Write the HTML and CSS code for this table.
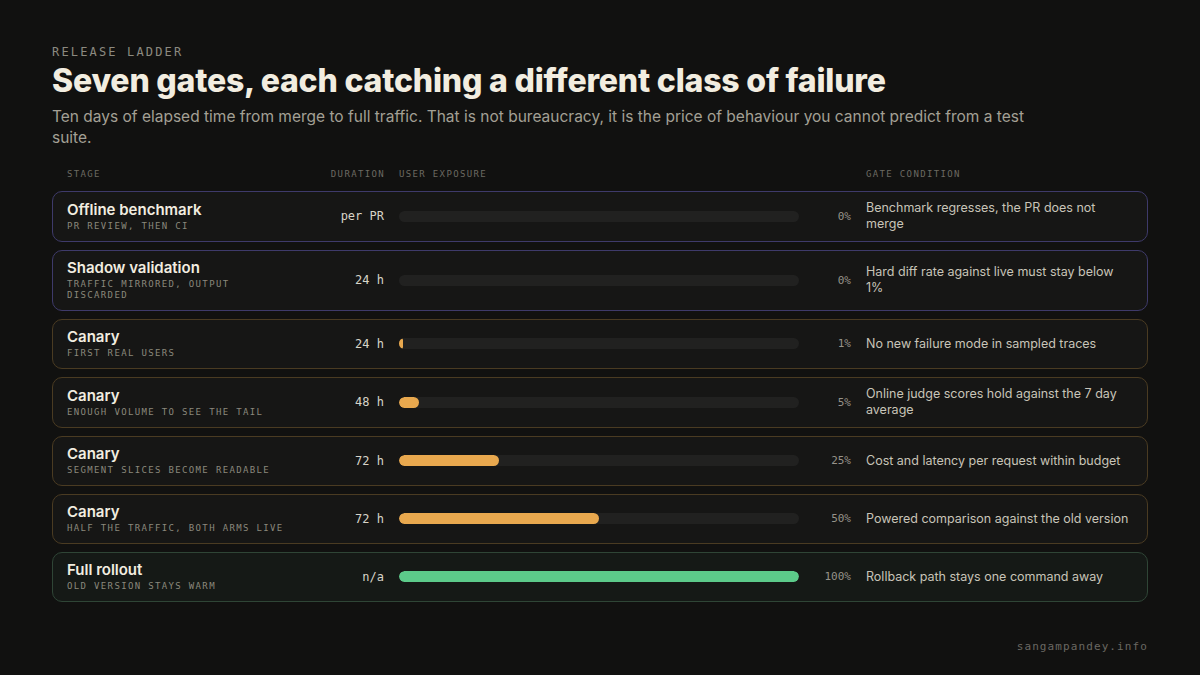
FILE: index.html
```html
<!DOCTYPE html>
<html lang="en">
<head>
<meta charset="utf-8">
<title>Release ladder</title>
<link rel="stylesheet" href="styles.css">
</head>
<body>
<main class="page">
  <header class="intro">
    <div class="eyebrow">RELEASE LADDER</div>
    <h1 class="title">Seven gates, each catching a different class of failure</h1>
    <p class="lede">Ten days of elapsed time from merge to full traffic. That is not bureaucracy, it is the price of behaviour you cannot predict from a test suite.</p>
  </header>

  <section class="ladder">
    <div class="grid head">
      <div>STAGE</div>
      <div class="dur">DURATION</div>
      <div>USER EXPOSURE</div>
      <div></div>
      <div>GATE CONDITION</div>
    </div>

    <div class="grid row pre">
      <div class="stage"><div class="name">Offline benchmark</div><div class="sub">PR REVIEW, THEN CI</div></div>
      <div class="dur">per PR</div>
      <div class="track"><div class="fill" style="width:0%"></div></div>
      <div class="pct">0%</div>
      <div class="gate">Benchmark regresses, the PR does not merge</div>
    </div>

    <div class="grid row pre">
      <div class="stage"><div class="name">Shadow validation</div><div class="sub">TRAFFIC MIRRORED, OUTPUT DISCARDED</div></div>
      <div class="dur">24 h</div>
      <div class="track"><div class="fill" style="width:0%"></div></div>
      <div class="pct">0%</div>
      <div class="gate">Hard diff rate against live must stay below 1%</div>
    </div>

    <div class="grid row canary">
      <div class="stage"><div class="name">Canary</div><div class="sub">FIRST REAL USERS</div></div>
      <div class="dur">24 h</div>
      <div class="track"><div class="fill" style="width:1%"></div></div>
      <div class="pct">1%</div>
      <div class="gate">No new failure mode in sampled traces</div>
    </div>

    <div class="grid row canary">
      <div class="stage"><div class="name">Canary</div><div class="sub">ENOUGH VOLUME TO SEE THE TAIL</div></div>
      <div class="dur">48 h</div>
      <div class="track"><div class="fill" style="width:5%"></div></div>
      <div class="pct">5%</div>
      <div class="gate">Online judge scores hold against the 7 day average</div>
    </div>

    <div class="grid row canary">
      <div class="stage"><div class="name">Canary</div><div class="sub">SEGMENT SLICES BECOME READABLE</div></div>
      <div class="dur">72 h</div>
      <div class="track"><div class="fill" style="width:25%"></div></div>
      <div class="pct">25%</div>
      <div class="gate">Cost and latency per request within budget</div>
    </div>

    <div class="grid row canary">
      <div class="stage"><div class="name">Canary</div><div class="sub">HALF THE TRAFFIC, BOTH ARMS LIVE</div></div>
      <div class="dur">72 h</div>
      <div class="track"><div class="fill" style="width:50%"></div></div>
      <div class="pct">50%</div>
      <div class="gate">Powered comparison against the old version</div>
    </div>

    <div class="grid row full">
      <div class="stage"><div class="name">Full rollout</div><div class="sub">OLD VERSION STAYS WARM</div></div>
      <div class="dur">n/a</div>
      <div class="track"><div class="fill" style="width:100%"></div></div>
      <div class="pct">100%</div>
      <div class="gate">Rollback path stays one command away</div>
    </div>
  </section>

  <footer class="credit">sangampandey.info</footer>
</main>
</body>
</html>
```
FILE: styles.css
```css
* { box-sizing: border-box; }
html, body { margin: 0; padding: 0; }
body {
  background: #111110;
  color: #f2ede0;
  font-family: Inter, "Noto Sans", sans-serif;
  width: 1200px;
  height: 675px;
  overflow: hidden;
}
.page {
  padding: 45px 52px 0 52px;
  display: flex;
  flex-direction: column;
  height: 675px;
}
.eyebrow {
  font-family: "DejaVu Sans Mono", monospace;
  font-size: 12px;
  line-height: 14px;
  letter-spacing: 0.18em;
  color: #8c8a80;
}
.title {
  margin: 4px 0 0 0;
  font-size: 32px;
  line-height: 35px;
  font-weight: 800;
  letter-spacing: -0.006em;
  color: #f2ede0;
}
.lede {
  margin: 8px 0 0 0;
  max-width: 990px;
  font-size: 15.5px;
  line-height: 21px;
  color: #a3a095;
}
.ladder {
  margin-top: 20px;
  display: flex;
  flex-direction: column;
  gap: 8px;
}
.grid {
  display: grid;
  grid-template-columns: 220px 82px 400px 37px 268px;
  column-gap: 15px;
  align-items: center;
}
.head {
  padding: 0 15px;
  font-family: "DejaVu Sans Mono", monospace;
  font-size: 9px;
  line-height: 12px;
  letter-spacing: 0.15em;
  color: #6c6a62;
  margin-bottom: 3px;
}
.head .dur { text-align: right; margin-right: -1px; }
.row {
  background: #161615;
  border: 1px solid #3e3a6a;
  border-radius: 10px;
  padding: 8px 14px 9px 14px;
}
.row.canary { border-color: #4a3b22; }
.row.full { border-color: #2f4536; background: #151916; }
.name {
  font-size: 15px;
  line-height: 18px;
  font-weight: 600;
  color: #f2ede0;
}
.sub {
  margin-top: 2px;
  font-family: "DejaVu Sans Mono", monospace;
  font-size: 9px;
  line-height: 11px;
  letter-spacing: 0.15em;
  color: #8a887c;
}
.row .dur {
  text-align: right;
  font-family: "DejaVu Sans Mono", monospace;
  font-size: 12px;
  color: #d8d4c8;
}
.track {
  height: 11px;
  border-radius: 6px;
  background: #212120;
  overflow: hidden;
}
.fill {
  height: 100%;
  border-radius: 6px;
  background: #e8a84e;
}
.full .fill { background: #5ccb8a; }
.pct {
  text-align: right;
  font-family: "DejaVu Sans Mono", monospace;
  font-size: 11px;
  color: #96938a;
}
.gate {
  font-size: 12.5px;
  line-height: 16px;
  color: #c8c4b8;
}
.credit {
  margin-top: auto;
  margin-bottom: 22px;
  text-align: right;
  font-family: "DejaVu Sans Mono", monospace;
  font-size: 11px;
  letter-spacing: 0.1em;
  color: #6a6862;
}
```
